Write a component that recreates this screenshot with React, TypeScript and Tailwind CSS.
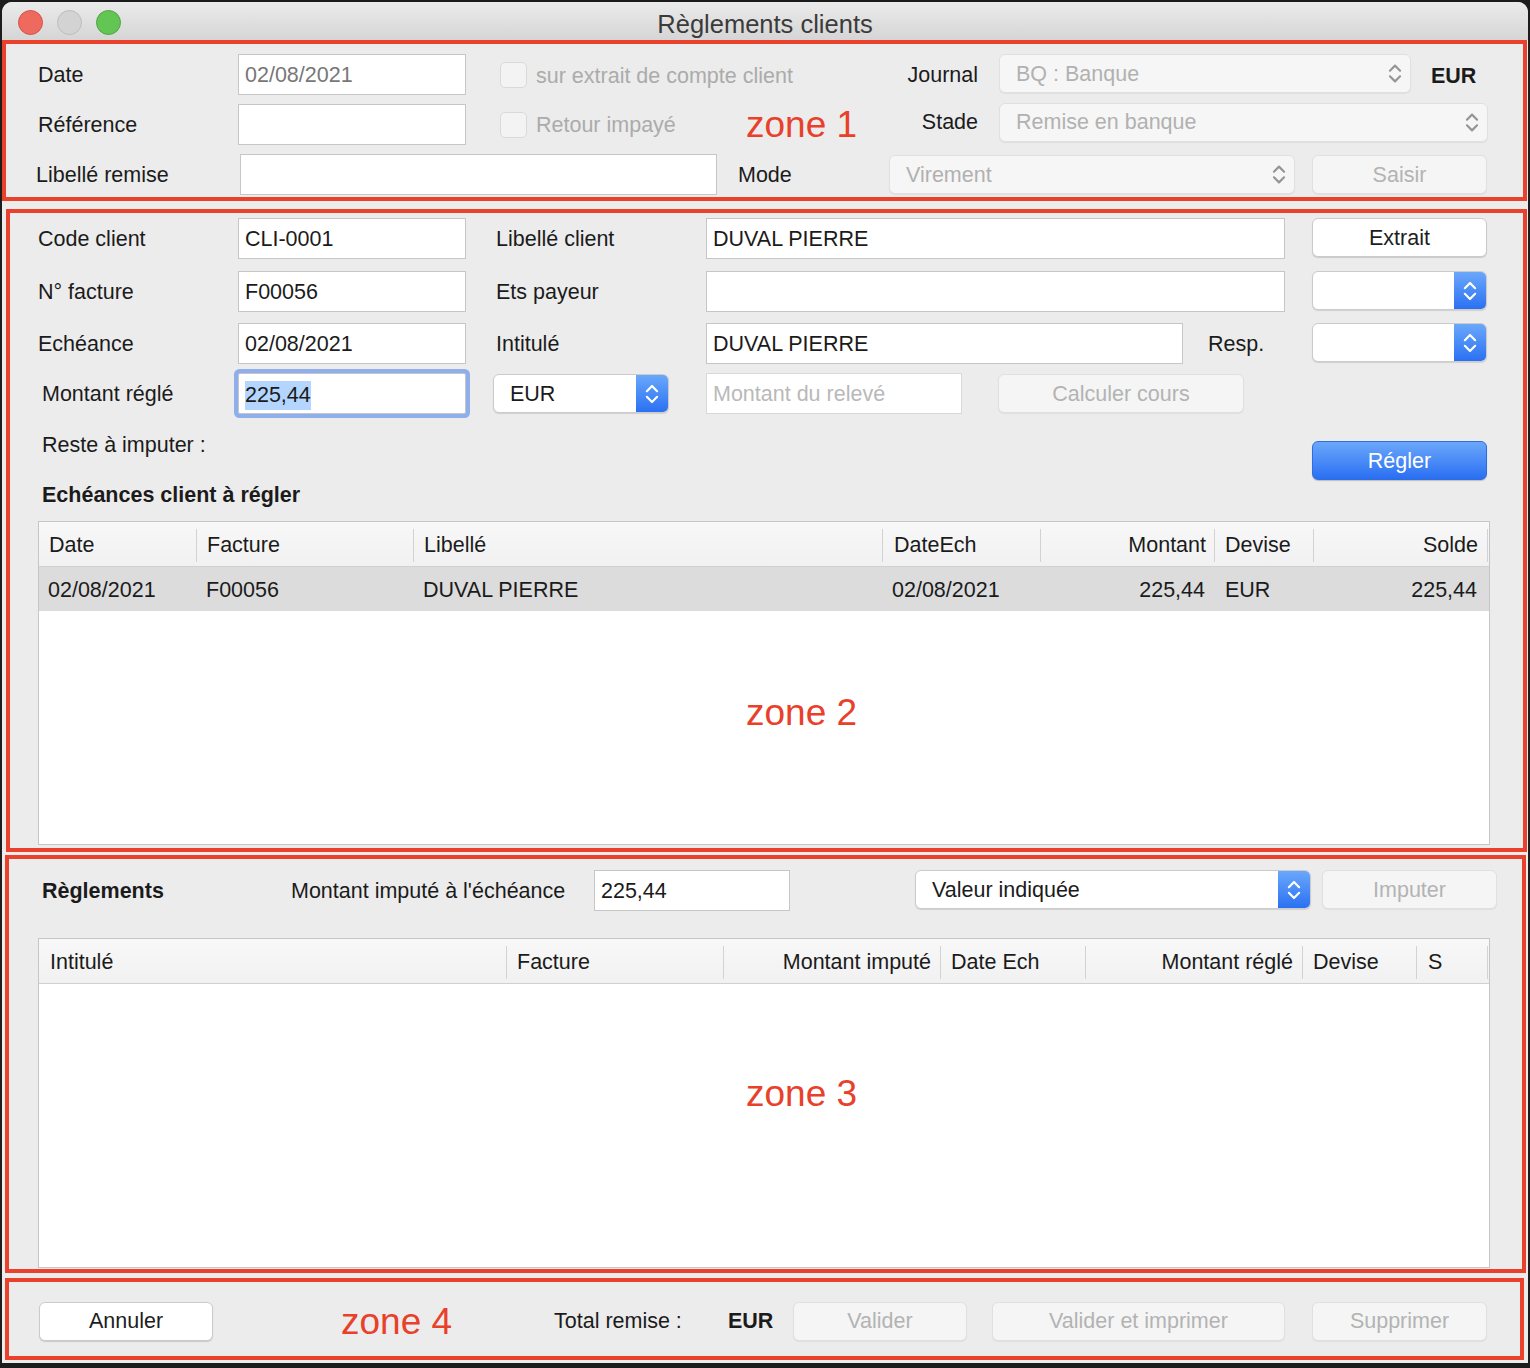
import React from 'react';

type P = { className?: string; children?: React.ReactNode };

function Chevrons({ className = '' }: { className?: string }) {
  return (
    <svg viewBox="0 0 14 24" className={className} fill="none" stroke="currentColor" strokeWidth="1.9" strokeLinecap="round" strokeLinejoin="round">
      <path d="M2.5 9.5 L7 5 L11.5 9.5" />
      <path d="M2.5 14.5 L7 19 L11.5 14.5" />
    </svg>
  );
}

function Input({ className = '', children }: P) {
  return (
    <div className={`h-[41px] shrink-0 bg-white border border-[#c6c6c6] flex items-center pl-[6px] whitespace-nowrap ${className}`}>
      {children}
    </div>
  );
}

function Checkbox({ className = '' }: { className?: string }) {
  return <div className={`w-[27px] h-[26px] shrink-0 rounded-[5px] border border-[#d9d9d9] bg-[#f3f3f3] ${className}`} />;
}

function GraySelect({ className = '', children }: P) {
  return (
    <div className={`h-[39px] shrink-0 rounded-[6px] bg-[#f6f6f6] border border-[#e0e0e0] shadow-[0_1px_1px_rgba(0,0,0,0.06)] flex items-center pl-[16px] pr-[7px] text-[#b1b1b1] ${className}`}>
      <span className="flex-1 whitespace-nowrap">{children}</span>
      <Chevrons className="w-[16px] h-[27px] text-[#959595]" />
    </div>
  );
}

function BlueSelect({ className = '', children }: P) {
  return (
    <div className={`h-[39px] shrink-0 rounded-[6px] bg-white border border-[#cbcbcb] shadow-[0_1px_1px_rgba(0,0,0,0.12)] flex overflow-hidden ${className}`}>
      <span className="flex-1 flex items-center pl-[16px] whitespace-nowrap">{children}</span>
      <div className="w-[32px] bg-gradient-to-b from-[#6aa7fb] to-[#2b70f2] flex items-center justify-center">
        <Chevrons className="w-[16px] h-[30px] text-white" />
      </div>
    </div>
  );
}

function Btn({ className = '', children, kind = 'white' }: P & { kind?: 'white' | 'off' | 'blue' }) {
  const look =
    kind === 'white'
      ? 'bg-white border-[#cbcbcb] text-[#1d1d1d] shadow-[0_1px_1px_rgba(0,0,0,0.15)]'
      : kind === 'off'
      ? 'bg-[#f5f5f5] border-[#e0e0e0] text-[#b3b3b3] shadow-[0_1px_1px_rgba(0,0,0,0.06)]'
      : 'bg-gradient-to-b from-[#6ba7fa] to-[#2a6ef2] border-[#2c6ee2] text-white shadow-[0_1px_1px_rgba(0,0,0,0.2)]';
  return (
    <div className={`h-[39px] shrink-0 rounded-[6px] border flex items-center justify-center whitespace-nowrap ${look} ${className}`}>
      {children}
    </div>
  );
}

function Sep() {
  return <div className="w-px h-[33px] bg-[#d2d2d2] shrink-0" />;
}

function Zone({ className = '', children }: P) {
  return <span className={`text-[37px] leading-none text-[#e8402a] whitespace-nowrap ${className}`}>{children}</span>;
}

export default function App() {
  return (
    <div className="w-[1530px] h-[1368px] bg-[#1c1c1c] overflow-hidden font-['Liberation_Sans',Arial,sans-serif] text-[21.5px] leading-[24px] text-[#1b1b1b]">
      <div className="ml-[2px] mt-[2px] w-[1526px] h-[1361px] rounded-t-[10px] bg-[#ececec] overflow-hidden flex flex-col">
        {/* barre de titre */}
        <div className="h-[38px] shrink-0 bg-gradient-to-b from-[#ebebeb] to-[#d5d5d5] grid grid-cols-[1fr_auto_1fr] items-center pt-[5px]">
          <div className="flex items-center gap-[14px] pl-[16px] -mt-[2px]">
            <div className="w-[25px] h-[25px] rounded-full bg-[#ee6a5f] border border-[#d35247]" />
            <div className="w-[25px] h-[25px] rounded-full bg-[#d3d3d3] border border-[#bdbdbd]" />
            <div className="w-[25px] h-[25px] rounded-full bg-[#62c554] border border-[#4ea53f]" />
          </div>
          <div className="text-[25.5px] leading-[30px] text-[#3b3b3b]">Règlements clients</div>
          <div />
        </div>

        {/* zone 1 */}
        <div className="w-[1525px] h-[161px] shrink-0 border-4 border-[#e9412b] pl-[32px] pt-[10px] flex flex-col gap-[9px]">
          <div className="flex items-center h-[41px]">
            <span className="w-[200px] shrink-0">Date</span>
            <Input className="w-[228px] text-[#777777]">02/08/2021</Input>
            <Checkbox className="ml-[34px]" />
            <span className="ml-[9px] w-[355px] shrink-0 text-[#ababab] whitespace-nowrap mt-[2px]">sur extrait de compte client</span>
            <span className="w-[87px] shrink-0 text-right">Journal</span>
            <GraySelect className="ml-[21px] w-[412px] -mt-[2px]">BQ : Banque</GraySelect>
            <span className="ml-[20px] font-bold mt-[2px]">EUR</span>
          </div>
          <div className="flex items-center h-[41px]">
            <span className="w-[200px] shrink-0">Référence</span>
            <Input className="w-[228px]" />
            <Checkbox className="ml-[34px]" />
            <span className="ml-[9px] w-[210px] shrink-0 text-[#ababab] whitespace-nowrap">Retour impayé</span>
            <div className="w-[145px] shrink-0"><Zone>zone 1</Zone></div>
            <span className="w-[87px] shrink-0 text-right -mt-[6px]">Stade</span>
            <GraySelect className="ml-[21px] w-[489px] -mt-[5px]">Remise en banque</GraySelect>
          </div>
          <div className="flex items-center h-[41px]">
            <span className="w-[204px] shrink-0 -ml-[2px]">Libellé remise</span>
            <Input className="w-[477px]" />
            <span className="ml-[21px] w-[151px] shrink-0">Mode</span>
            <GraySelect className="w-[406px]">Virement</GraySelect>
            <Btn kind="off" className="ml-[17px] w-[175px]">Saisir</Btn>
          </div>
        </div>

        {/* zone 2 */}
        <div className="ml-[4px] mt-[8px] w-[1521px] h-[643px] shrink-0 border-4 border-[#e9412b] pl-[28px] pt-[5px] flex flex-col">
          <div className="flex items-center h-[41px]">
            <span className="w-[200px] shrink-0">Code client</span>
            <Input className="w-[228px]">CLI-0001</Input>
            <span className="ml-[30px] w-[210px] shrink-0">Libellé client</span>
            <Input className="w-[579px]">DUVAL PIERRE</Input>
            <Btn className="ml-[27px] w-[175px] -mt-[2px]">Extrait</Btn>
          </div>
          <div className="flex items-center h-[41px] mt-[12px]">
            <span className="w-[200px] shrink-0">N° facture</span>
            <Input className="w-[228px]">F00056</Input>
            <span className="ml-[30px] w-[210px] shrink-0">Ets payeur</span>
            <Input className="w-[579px]" />
            <BlueSelect className="ml-[27px] w-[175px] -mt-[2px]" />
          </div>
          <div className="flex items-center h-[41px] mt-[11px]">
            <span className="w-[200px] shrink-0">Echéance</span>
            <Input className="w-[228px]">02/08/2021</Input>
            <span className="ml-[30px] w-[210px] shrink-0">Intitulé</span>
            <Input className="w-[477px]">DUVAL PIERRE</Input>
            <span className="ml-[25px] w-[104px] shrink-0">Resp.</span>
            <BlueSelect className="w-[175px] -mt-[2px]" />
          </div>
          <div className="flex items-center h-[41px] mt-[9px]">
            <span className="ml-[4px] w-[196px] shrink-0">Montant réglé</span>
            <Input className="w-[228px] border-[#7d9fdc] rounded-[2px] shadow-[0_0_0_4px_#8eafec] pt-[3px]">
              <span className="bg-[#b4d5fe] leading-[29px]">225,44</span>
            </Input>
            <BlueSelect className="ml-[27px] w-[176px]">EUR</BlueSelect>
            <Input className="ml-[37px] w-[256px] text-[#b9b9b9] border-[#d8d8d8]">Montant du relevé</Input>
            <Btn kind="off" className="ml-[36px] w-[246px]">Calculer cours</Btn>
          </div>
          <div className="flex h-[107px]">
            <div className="ml-[4px] w-[1270px] flex flex-col">
              <span className="mt-[19px]">Reste à imputer :</span>
              <span className="mt-[26px] font-bold">Echéances client à régler</span>
            </div>
            <Btn kind="blue" className="mt-[27px] w-[175px]">Régler</Btn>
          </div>
          <div className="w-[1452px] h-[324px] border border-[#c6c6c6] bg-white flex flex-col">
            <div className="h-[45px] shrink-0 bg-gradient-to-b from-[#f8f8f8] to-[#f1f1f1] border-b border-[#d0d0d0] flex items-center pt-[2px]">
              <div className="w-[158px] flex items-center"><span className="flex-1 pl-[10px]">Date</span><Sep /></div>
              <div className="w-[217px] flex items-center"><span className="flex-1 pl-[10px]">Facture</span><Sep /></div>
              <div className="w-[469px] flex items-center"><span className="flex-1 pl-[10px]">Libellé</span><Sep /></div>
              <div className="w-[158px] flex items-center"><span className="flex-1 pl-[11px]">DateEch</span><Sep /></div>
              <div className="w-[174px] flex items-center"><span className="flex-1 text-right pr-[8px]">Montant</span><Sep /></div>
              <div className="w-[99px] flex items-center"><span className="flex-1 pl-[10px]">Devise</span><Sep /></div>
              <div className="w-[174px] flex items-center"><span className="flex-1 text-right pr-[9px]">Solde</span><Sep /></div>
            </div>
            <div className="h-[44px] shrink-0 bg-[#dcdcdc] flex items-center pt-[2px]">
              <span className="w-[158px] pl-[9px]">02/08/2021</span>
              <span className="w-[217px] pl-[9px]">F00056</span>
              <span className="w-[469px] pl-[9px]">DUVAL PIERRE</span>
              <span className="w-[158px] pl-[9px]">02/08/2021</span>
              <span className="w-[174px] text-right pr-[10px]">225,44</span>
              <span className="w-[99px] pl-[10px]">EUR</span>
              <span className="w-[174px] text-right pr-[11px]">225,44</span>
            </div>
            <div className="flex-1 pl-[707px] pt-[83px]">
              <Zone>zone 2</Zone>
            </div>
          </div>
        </div>

        {/* zone 3 */}
        <div className="ml-[3px] mt-[3px] w-[1521px] h-[418px] shrink-0 border-4 border-[#e9412b] pl-[29px] pt-[11px] flex flex-col">
          <div className="flex items-center h-[41px]">
            <span className="ml-[4px] w-[249px] shrink-0 font-bold">Règlements</span>
            <span className="w-[303px] shrink-0 whitespace-nowrap">Montant imputé à l'échéance</span>
            <Input className="w-[196px]">225,44</Input>
            <BlueSelect className="ml-[125px] w-[396px] -mt-[2px]">Valeur indiquée</BlueSelect>
            <Btn kind="off" className="ml-[11px] w-[175px] -mt-[2px]">Imputer</Btn>
          </div>
          <div className="mt-[27px] w-[1452px] h-[330px] border border-[#c6c6c6] bg-white flex flex-col">
            <div className="h-[45px] shrink-0 bg-gradient-to-b from-[#f8f8f8] to-[#f1f1f1] border-b border-[#d0d0d0] flex items-center pt-[2px]">
              <div className="w-[468px] flex items-center"><span className="flex-1 pl-[11px]">Intitulé</span><Sep /></div>
              <div className="w-[217px] flex items-center"><span className="flex-1 pl-[10px]">Facture</span><Sep /></div>
              <div className="w-[217px] flex items-center"><span className="flex-1 text-right pr-[9px] whitespace-nowrap">Montant imputé</span><Sep /></div>
              <div className="w-[145px] flex items-center"><span className="flex-1 pl-[10px]">Date Ech</span><Sep /></div>
              <div className="w-[217px] flex items-center"><span className="flex-1 text-right pr-[9px] whitespace-nowrap">Montant réglé</span><Sep /></div>
              <div className="w-[114px] flex items-center"><span className="flex-1 pl-[10px]">Devise</span><Sep /></div>
              <div className="w-[71px] flex items-center"><span className="flex-1 pl-[11px]">S</span><Sep /></div>
            </div>
            <div className="flex-1 pl-[707px] pt-[91px]">
              <Zone>zone 3</Zone>
            </div>
          </div>
        </div>

        {/* zone 4 */}
        <div className="ml-[3px] mt-[5px] w-[1519px] h-[82px] shrink-0 border-4 border-[#e9412b] pl-[30px] pt-[4px] flex items-center">
          <Btn className="w-[174px] h-[38px]">Annuler</Btn>
          <div className="ml-[128px] w-[213px] shrink-0"><Zone>zone 4</Zone></div>
          <span className="w-[174px] shrink-0">Total remise :</span>
          <span className="w-[65px] shrink-0 font-bold">EUR</span>
          <Btn kind="off" className="w-[174px] h-[38px]">Valider</Btn>
          <Btn kind="off" className="ml-[25px] w-[293px] h-[38px]">Valider et imprimer</Btn>
          <Btn kind="off" className="ml-[27px] w-[175px] h-[38px]">Supprimer</Btn>
        </div>
      </div>
    </div>
  );
}
